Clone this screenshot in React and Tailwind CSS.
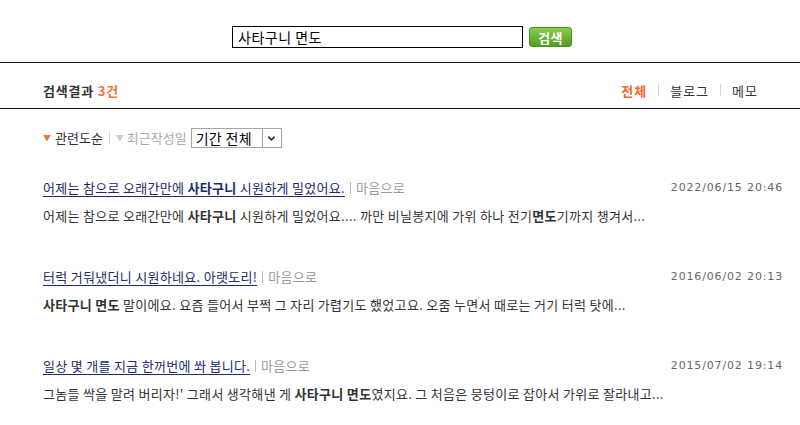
import { ChevronDown } from 'lucide-react';

const items = [
  {
    title: (
      <>
        어제는 참으로 오래간만에 <b>사타구니</b> 시원하게 밀었어요.
      </>
    ),
    date: '2022/06/15 20:46',
    desc: (
      <>
        어제는 참으로 오래간만에 <b>사타구니</b> 시원하게 밀었어요.... 까만 비닐봉지에 가위 하나 전기<b>면도</b>기까지 챙겨서...
      </>
    ),
  },
  {
    title: <>터럭 거둬냈더니 시원하네요. 아랫도리!</>,
    date: '2016/06/02 20:13',
    desc: (
      <>
        <b>사타구니 면도</b> 말이에요. 요즘 들어서 부쩍 그 자리 가렵기도 했었고요. 오줌 누면서 때로는 거기 터럭 탓에...
      </>
    ),
  },
  {
    title: <>일상 몇 개를 지금 한꺼번에 쏴 봅니다.</>,
    date: '2015/07/02 19:14',
    desc: (
      <>
        그놈들 싹을 말려 버리자!' 그래서 생각해낸 게 <b>사타구니 면도</b>였지요. 그 처음은 뭉텅이로 잡아서 가위로 잘라내고...
      </>
    ),
  },
];

function Sep() {
  return <span className="mx-[11px] inline-block h-[12px] w-px bg-[#d5d5d5]" />;
}

export default function App() {
  return (
    <div className="w-[800px] h-[425px] bg-white text-[13px] tracking-[0.3px] text-[#333] font-['Noto_Sans_CJK_KR','Liberation_Sans',sans-serif] overflow-hidden">
      <div className="flex justify-center items-center gap-[6px] pl-[4px] pt-[26px] pb-[14px]">
        <div className="w-[291px] h-[22px] border border-black flex items-center px-[5px] text-[14px] tracking-[0.5px] text-black">
          사타구니 면도
        </div>
        <button className="w-[43px] h-[20px] rounded-[3px] border border-[#4a921f] bg-gradient-to-b from-[#8ccc4e] to-[#4f9e1f] text-white font-bold text-[13px] leading-none flex items-center justify-center">
          검색
        </button>
      </div>

      <div className="border-t border-b border-[#111] h-[47px] flex items-end justify-between pl-[43px] pr-[42px] pb-[8px]">
        <div className="font-bold tracking-[0.8px] text-[#333]">
          검색결과 <span className="text-[#f0743c]">3건</span>
        </div>
        <div className="flex items-center tracking-[1px]">
          <span className="font-bold text-[#f0692e]">전체</span>
          <Sep />
          <span>블로그</span>
          <Sep />
          <span>메모</span>
        </div>
      </div>

      <div className="flex items-center pl-[43px] pt-[19px] tracking-[0px]">
        <span className="text-[#f0743c] text-[8px] mr-[4px]">▼</span>
        <span className="text-[#333]">관련도순</span>
        <span className="mx-[6px] inline-block h-[12px] w-px bg-[#d5d5d5]" />
        <span className="text-[#ccc] text-[8px] mr-[3px]">▼</span>
        <span className="text-[#aaa]">최근작성일</span>
        <div className="ml-[4px] w-[91px] h-[20px] border border-[#a5a5a5] flex items-center text-[14px] tracking-[0.3px] text-black">
          <span className="flex-1 pl-[4px]">기간 전체</span>
          <span className="w-[19px] h-full border-l border-[#a5a5a5] flex items-center justify-center">
            <ChevronDown size={11} strokeWidth={3.5} className="text-[#333]" />
          </span>
        </div>
      </div>

      <div className="pl-[43px] pr-[17px] pt-[30px] flex flex-col gap-[42px]">
        {items.map((it, i) => (
          <div key={i} className="flex flex-col gap-[8px]">
            <div className="flex items-center justify-between">
              <div className="flex items-center">
                <span className="text-[#1c2a6e] underline underline-offset-[3px]">{it.title}</span>
                <span className="mx-[5px] inline-block h-[12px] w-px bg-[#bbb]" />
                <span className="text-[#999]">마음으로</span>
              </div>
              <span className="text-[11px] tracking-[0.85px] text-[#666] font-['DejaVu_Sans',sans-serif]">{it.date}</span>
            </div>
            <div className="text-[#333]">{it.desc}</div>
          </div>
        ))}
      </div>
    </div>
  );
}
